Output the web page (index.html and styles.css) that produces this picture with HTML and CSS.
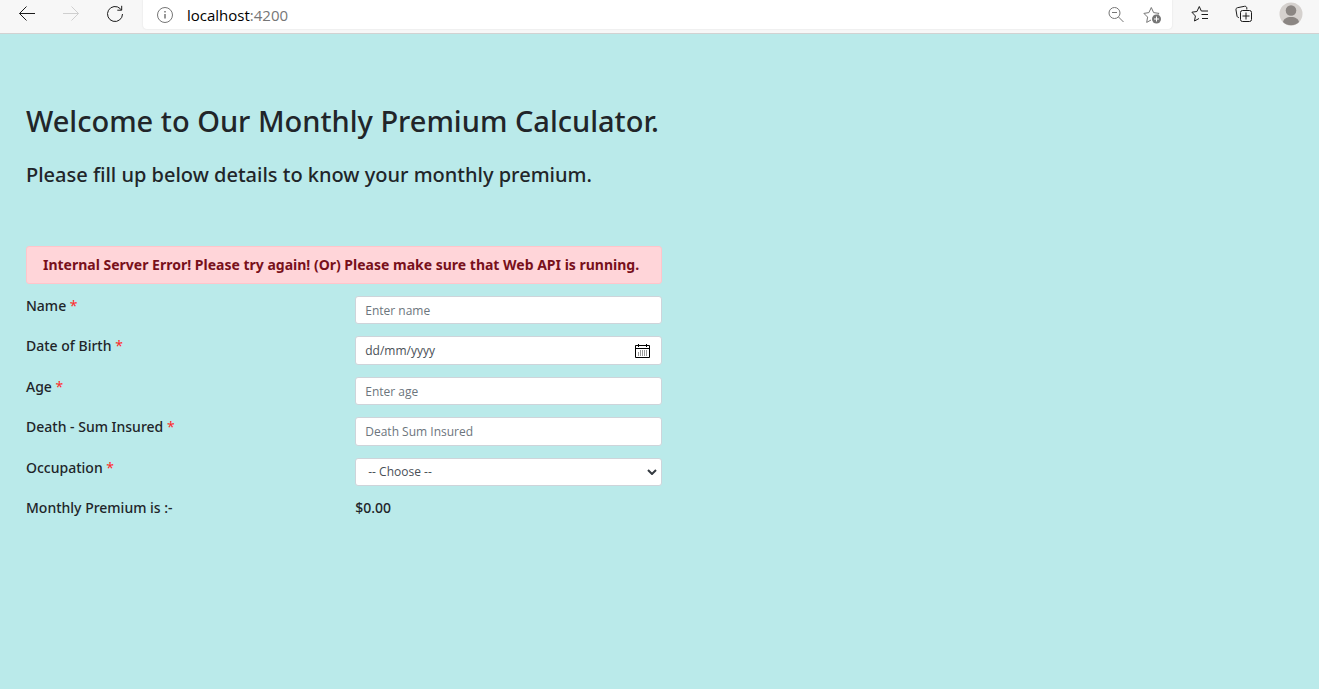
FILE: index.html
```html
<!DOCTYPE html>
<html lang="en">
<head>
<meta charset="utf-8">
<meta name="viewport" content="width=device-width, initial-scale=1">
<title>Monthly Premium Calculator</title>
<link rel="stylesheet" href="styles.css">
</head>
<body>
<header class="toolbar">
  <nav class="nav-buttons" aria-label="Browser navigation">
    <button class="icon-button" type="button" aria-label="Back">
      <svg width="18" height="18" viewBox="0 0 18 18"><path d="M17 8.500H1.500M8.500 1.500l-7 7 7 7"/></svg>
    </button>
    <button class="icon-button faded" type="button" aria-label="Forward" disabled>
      <svg width="18" height="18" viewBox="0 0 18 18"><path d="M1 8.500h15.500M9.500 1.500l7 7-7 7"/></svg>
    </button>
    <button class="icon-button" type="button" aria-label="Refresh">
      <svg width="18" height="18" viewBox="0 0 18 18"><path d="M16.500 9A7.500 7.500 0 1 1 14.300 3.700L15.500 5M15.700 0.800V5.200H11.300"/></svg>
    </button>
  </nav>
  <div class="address-bar">
    <button class="icon-button muted" type="button" aria-label="Site information">
      <svg width="18" height="18" viewBox="0 0 18 18"><circle cx="9" cy="9" r="7.500"/><path d="M9 8v4.500M9 5v1.500" stroke-width="1.500"/></svg>
    </button>
    <span class="address">localhost<span class="port">:4200</span></span>
    <button class="icon-button muted" type="button" aria-label="Zoom out">
      <svg width="18" height="18" viewBox="0 0 18 18"><circle cx="7.500" cy="7" r="5.500"/><path d="M5 6.500h5M11.500 11l5 5"/></svg>
    </button>
    <button class="icon-button muted" type="button" aria-label="Add to favorites">
      <svg width="18" height="18" viewBox="0 0 18 18"><path d="M8 14l-4.300 2.400.9-5.300L0.900 7.400l5-.8L8.300 1.500l2.300 5.100 5.500.8-1.600 1.500"/><circle class="solid" cx="13.500" cy="13" r="4.500"/><path class="light" d="M13.500 10.500v5M11 13h5"/></svg>
    </button>
  </div>
  <div class="tools">
    <button class="icon-button" type="button" aria-label="Favorites">
      <svg width="18" height="18" viewBox="0 0 18 18"><path d="M8 13.500l-4.500 2.500.9-5L0.900 7.200l5-.7L8.300 1.500l2 4.500H17M10.500 9.500H17M11 13.500h6"/></svg>
    </button>
    <button class="icon-button" type="button" aria-label="Collections">
      <svg width="18" height="18" viewBox="0 0 18 18"><path d="M4 12.500c-1.200 0-1.700-.5-2-1.500L1 5c-.2-1.300.3-2 1.500-2.300L9.500 1.300c1.200-.2 2 .3 2.300 1.500v1.700M7.500 5.500h7a2 2 0 0 1 2 2v7a2 2 0 0 1-2 2h-7a2 2 0 0 1-2-2v-7a2 2 0 0 1 2-2zM11 7.500v7M7.500 11h7"/></svg>
    </button>
    <button class="icon-button profile" type="button" aria-label="Profile">
      <svg width="24" height="24" viewBox="0 0 24 24"><circle cx="12" cy="12" r="11.500" fill="#d5d1ce"/><circle cx="12" cy="8.500" r="5.300" fill="#8b8683"/><path d="M4 20c.5-3 3.500-5 8-5s7.500 2 8 5c-4.500 4.300-11.500 4.300-16 0z" fill="#8b8683"/></svg>
    </button>
  </div>
</header>
<main class="page">
  <h1 class="title">Welcome to Our Monthly Premium Calculator.</h1>
  <h2 class="subtitle">Please fill up below details to know your monthly premium.</h2>
  <form class="premium-form">
    <div class="alert" role="alert">Internal Server Error! Please try again! (Or) Please make sure that Web API is running.</div>
    <div class="form-row">
      <label for="name">Name <span class="required">*</span></label>
      <input class="control" id="name" type="text" placeholder="Enter name">
    </div>
    <div class="form-row">
      <label for="dob">Date of Birth <span class="required">*</span></label>
      <div class="control control-tall date-control">
        <input class="date-input" id="dob" type="text" placeholder="dd/mm/yyyy">
        <button class="calendar-button" type="button" aria-label="Open calendar">
          <svg width="16" height="16" viewBox="0 0 16 16"><path d="M.5 2.500h14v12H.5zM.5 5.500h14M3.500 1v3M11.500 1v3"/><path class="days" d="M3.500 9v4M5.500 7v6M7.500 7v6M9.500 7v6M11.500 7v6"/></svg>
        </button>
      </div>
    </div>
    <div class="form-row">
      <label for="age">Age <span class="required">*</span></label>
      <input class="control" id="age" type="text" placeholder="Enter age">
    </div>
    <div class="form-row">
      <label for="sum">Death - Sum Insured <span class="required">*</span></label>
      <input class="control control-tall" id="sum" type="text" placeholder="Death Sum Insured">
    </div>
    <div class="form-row">
      <label for="occupation">Occupation <span class="required">*</span></label>
      <div class="select-wrap">
        <select class="control" id="occupation"><option>-- Choose --</option></select>
        <svg class="chevron" width="10" height="6" viewBox="0 0 10 6"><path d="M1 1l4 4 4-4"/></svg>
      </div>
    </div>
    <div class="form-row">
      <span>Monthly Premium is :-</span>
      <output for="name dob age sum occupation">$0.00</output>
    </div>
  </form>
</main>
</body>
</html>
```
FILE: styles.css
```css
* { box-sizing: border-box; }

body {
  margin: 0;
  min-height: 100vh;
  background: #baeaea;
  color: #212529;
  font-family: "Noto Sans", "Open Sans", sans-serif;
  font-size: 14px;
  line-height: 20px;
}

button, input, select { font: inherit; color: inherit; }

svg { display: block; fill: none; stroke: currentColor; }

.toolbar {
  display: flex;
  height: 34px;
  background: #f7f7f7;
  border-bottom: 1px solid #d2d2d2;
}

.nav-buttons {
  display: flex;
  gap: 26px;
  width: 143px;
  height: 28px;
  padding-left: 18px;
}

.icon-button {
  display: flex;
  align-items: center;
  padding: 0;
  border: 0;
  background: none;
  color: #1b1b1b;
}

.icon-button.faded { color: #cfcfcf; }
.icon-button.muted { color: #767676; }

.address-bar {
  display: flex;
  flex: 1;
  align-items: center;
  gap: 18px;
  height: 29px;
  padding: 0 11px 0 13px;
  background: #fff;
  border-radius: 0 0 4px 4px;
  box-shadow: 0 0 2px #dcdcdc;
}

.address {
  flex: 1;
  margin-left: -5px;
  color: #000;
  font-family: "Open Sans", "Noto Sans", sans-serif;
  font-size: 15px;
  line-height: 18px;
}

.port { color: #767676; }
.solid { fill: currentColor; stroke: none; }
.light { stroke: #fff; }

.tools {
  display: flex;
  gap: 26px;
  height: 28px;
  padding: 0 16px 0 19px;
}

.profile svg { stroke: none; }

.page { padding: 67px 26px 0; }

.title {
  margin: 0;
  font-size: 29px;
  font-weight: 500;
  line-height: 40px;
}

.subtitle {
  margin: 19px 0 56px;
  font-size: 20px;
  font-weight: 500;
  line-height: 30px;
}

.premium-form {
  display: flex;
  flex-direction: column;
  gap: 12px;
  width: calc(50% + 2px);
  font-weight: 500;
}

.alert {
  padding: 8px 0 8px 16px;
  border: 1px solid #ffc5cb;
  border-radius: 3px;
  background: #ffd5d9;
  color: #78101b;
  font-weight: 700;
}

.form-row {
  display: grid;
  grid-template-columns: 1fr 1fr;
  gap: 23px;
  align-items: start;
}

.required { color: #ff2a2a; font-weight: 400; }

.control {
  width: 100%;
  height: 28px;
  padding: 0 9px;
  border: 1px solid #ced4da;
  border-radius: 3px;
  background: #fff;
  color: #495057;
  font-family: "Open Sans", "Noto Sans", sans-serif;
  font-size: 12px;
  font-weight: 400;
}

.control-tall { height: 29px; }

::placeholder { color: #6c757d; opacity: 1; }

.date-control { display: flex; align-items: center; padding-right: 10px; }

.date-input {
  flex: 1;
  min-width: 0;
  padding: 0;
  border: 0;
  background: none;
}

.date-input::placeholder { color: #495057; }

.calendar-button {
  padding: 0;
  border: 0;
  background: none;
  color: #000;
}

.days { stroke: #999; }

.select-wrap { display: grid; align-items: center; }

.select-wrap > * { grid-area: 1 / 1; }

.select-wrap .control { appearance: none; padding: 0 12px; }

.chevron {
  justify-self: end;
  margin-right: 5px;
  color: #343a40;
  stroke-width: 2;
  pointer-events: none;
}
```
